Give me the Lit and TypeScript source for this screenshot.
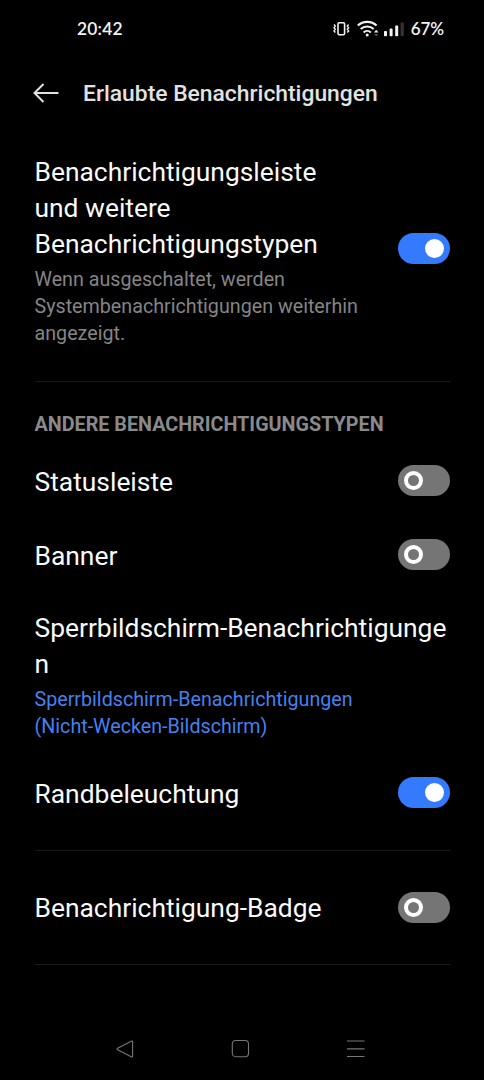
import { LitElement, html, css } from "lit";
import { customElement, property } from "lit/decorators.js";
import { classMap } from "lit/directives/class-map.js";

@customElement("toggle-switch")
class ToggleSwitch extends LitElement {
  @property({ type: Boolean }) on = false;
  static styles = css`
    :host { display: block; flex: none; }
    .track {
      display: flex; align-items: center; box-sizing: border-box;
      width: 51.5px; height: 31px; border-radius: 16px; padding: 0 6px;
      background: #757575;
    }
    .thumb {
      box-sizing: border-box; width: 19px; height: 19px;
      border: 4.5px solid #fff; border-radius: 50%;
    }
    .on { background: #347aff; justify-content: flex-end; }
    .on .thumb { background: #fff; }
  `;
  render() {
    return html`<div class=${classMap({ track: true, on: this.on })} role="switch" aria-checked=${this.on}>
      <div class="thumb"></div>
    </div>`;
  }
}

@customElement("status-bar")
class StatusBar extends LitElement {
  static styles = css`
    :host {
      display: flex; align-items: center; justify-content: space-between;
      height: 57px; box-sizing: border-box; padding: 0 40px 0 77px;
      font: 600 17.4px/24px Lato, sans-serif; color: #f2f2f2;
    }
    .time { letter-spacing: 0.2px; }
    .right { display: flex; align-items: center; }
    svg { display: block; }
    .pct { margin-left: 7px; font-size: 17px; letter-spacing: -0.1px; }
  `;
  render() {
    return html`
      <span class="time">20:42</span>
      <div class="right">
        <svg width="72" height="24" viewBox="0 0 72 24" fill="none" stroke="#f2f2f2">
          <g stroke-width="1.4">
            <rect x="6" y="5.7" width="6.6" height="12" rx="1.2" stroke-width="1.6" />
            <path d="M2 7.5l1.3 1.6L2 10.7l1.3 1.6L2 13.9l1.3 1.6M16.6 7.5l-1.3 1.6 1.3 1.6-1.3 1.6 1.3 1.6-1.3 1.6" />
          </g>
          <g stroke-width="2.1">
            <path d="M25.8 8.6a13.6 13.6 0 0 1 18.8 0" />
            <path d="M28.7 12.1a9.4 9.4 0 0 1 13 0" />
            <path d="M31.6 15.4a5.3 5.3 0 0 1 7.2 0" />
          </g>
          <circle cx="35.2" cy="18" r="1.5" fill="#f2f2f2" stroke="none" />
          <path d="M42 15.4l2.2-2.6 2.2 2.6z" fill="#f2f2f2" stroke="none" />
          <path d="M42 17h4.4l-2.2 2.2z" fill="#555" stroke="none" />
          <g stroke="none" fill="#f2f2f2">
            <rect x="52" y="14" width="3" height="5.2" rx="0.8" />
            <rect x="57.6" y="11.6" width="3" height="7.6" rx="0.8" />
            <rect x="63.2" y="8.6" width="3" height="10.6" rx="0.8" />
            <rect x="68.6" y="5.6" width="3.2" height="13.6" rx="0.8" fill="#333" />
          </g>
        </svg>
        <span class="pct">67%</span>
      </div>`;
  }
}

@customElement("app-root")
class AppRoot extends LitElement {
  static styles = css`
    :host {
      display: flex; flex-direction: column; height: 1080px; overflow: hidden;
      background: #000; color: #fafafa; font-family: Roboto, sans-serif;
    }
    svg { display: block; }
    header { display: flex; align-items: center; height: 72px; padding-left: 32px; gap: 23px; }
    h1 { margin: 0; font-size: 22.85px; font-weight: 500; color: #e2e2e2; line-height: 28px; padding-top: 1px; }
    main { flex: 1; padding: 24px 34.5px 0 34.5px; }
    .row { display: flex; align-items: center; justify-content: space-between; height: 74px; }
    .title { font-size: 26.4px; line-height: 36px; }
    .row > .title { padding-top: 2px; }
    .first { height: 190px; margin-bottom: 38px; }
    .first .text { padding-top: 4px; }
    .sub { font-size: 19.7px; line-height: 27px; color: #858585; margin-top: 4px; white-space: nowrap; }
    .link { color: #4680ef; }
    .rule { height: 1px; background: #1a1a1a; }
    .section { font-size: 19.75px; font-weight: 700; line-height: 24px; color: #8a8a8a; padding: 31px 0 6.5px; }
    .lock { padding: 18.5px 0 15.5px; }
    .lock .title { white-space: nowrap; }
    .edge { margin-bottom: 20.5px; }
    .badge { height: 113px; }
    .badge > .title { padding-top: 0; }
    nav { display: flex; justify-content: space-between; align-items: center; height: 63px; padding: 0 119px 0 115px; }
  `;
  render() {
    return html`
      <status-bar></status-bar>
      <header>
        <svg width="28" height="24" viewBox="0 0 28 24" fill="none" stroke="#e2e2e2" stroke-width="2">
          <path d="M11.5 3L2.5 12l9 9M2.5 12H26.5" />
        </svg>
        <h1>Erlaubte Benachrichtigungen</h1>
      </header>
      <main>
        <div class="row first">
          <div class="text">
            <div class="title">Benachrichtigungsleiste<br />und weitere<br />Benachrichtigungstypen</div>
            <div class="sub">Wenn ausgeschaltet, werden<br />Systembenachrichtigungen weiterhin<br />angezeigt.</div>
          </div>
          <toggle-switch on></toggle-switch>
        </div>
        <div class="rule"></div>
        <div class="section">ANDERE BENACHRICHTIGUNGSTYPEN</div>
        <div class="row"><div class="title">Statusleiste</div><toggle-switch></toggle-switch></div>
        <div class="row"><div class="title">Banner</div><toggle-switch></toggle-switch></div>
        <div class="lock">
          <div class="title">Sperrbildschirm-Benachrichtigunge<br />n</div>
          <div class="sub link">Sperrbildschirm-Benachrichtigungen<br />(Nicht-Wecken-Bildschirm)</div>
        </div>
        <div class="row edge"><div class="title">Randbeleuchtung</div><toggle-switch on></toggle-switch></div>
        <div class="rule"></div>
        <div class="row badge"><div class="title">Benachrichtigung-Badge</div><toggle-switch></toggle-switch></div>
        <div class="rule"></div>
      </main>
      <nav>
        <svg width="20" height="20" viewBox="0 0 20 20" fill="none" stroke="#777" stroke-width="1.1">
          <path d="M16.2 2.2Q17.6 1.5 17.6 3V17Q17.6 18.5 16.2 17.8L2.6 10.8Q1.4 10 2.6 9.2Z" />
        </svg>
        <svg width="20" height="20" viewBox="0 0 20 20" fill="none" stroke="#777" stroke-width="1.1">
          <rect x="1.3" y="1.5" width="16.2" height="16.2" rx="3.4" />
        </svg>
        <svg width="18" height="20" viewBox="0 0 18 20" stroke="#777" stroke-width="1.2">
          <path d="M0 2H17.5M0 9.8H17.5M0 17.5H17.5" />
        </svg>
      </nav>`;
  }
}
